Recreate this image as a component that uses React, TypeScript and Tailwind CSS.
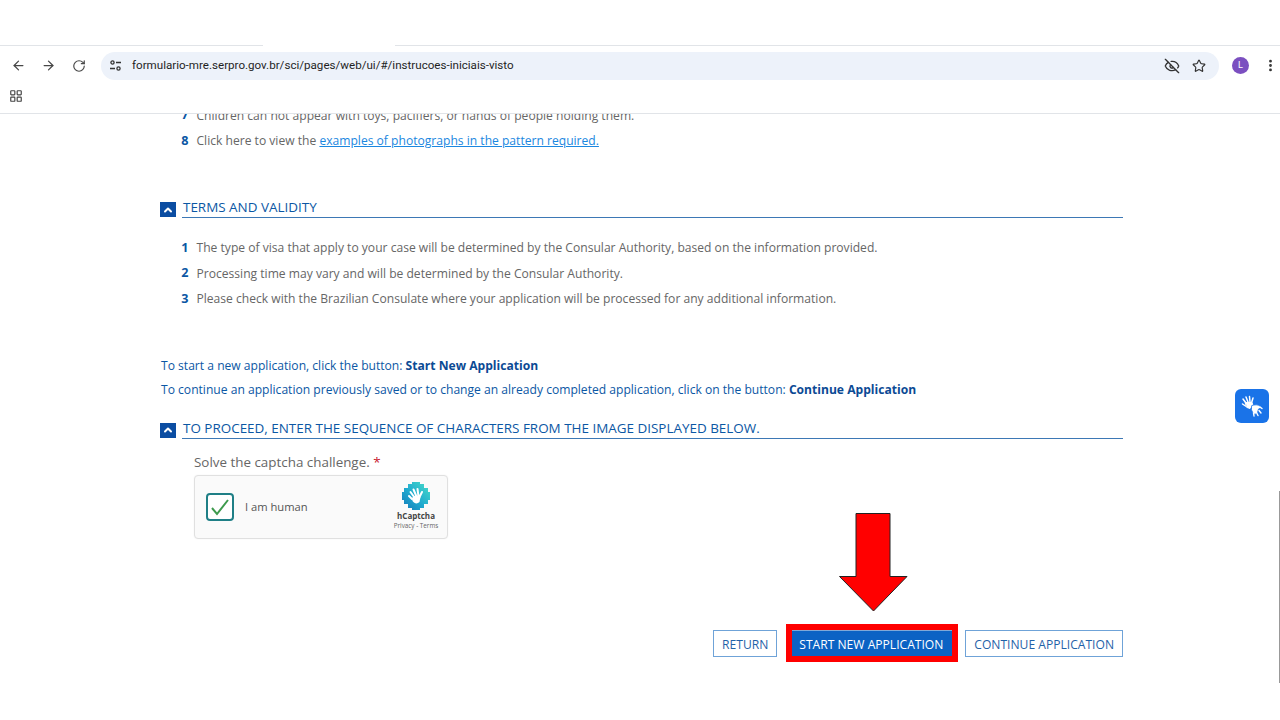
import React from "react";
import { ArrowLeft, ArrowRight, RotateCw, Star, EyeOff, MoreVertical, ChevronUp, LayoutGrid } from "lucide-react";

const F = "font-['Open_Sans',sans-serif]";

function Heading({ children }: { children: React.ReactNode }) {
  return (
    <div className="flex items-end h-[20px]">
      <div className="w-[16px] h-[15px] bg-[#0b4da2] flex items-center justify-center mb-[1px] shrink-0">
        <ChevronUp size={12} strokeWidth={4} className="text-white" />
      </div>
      <div className="ml-[6px] flex-1 border-b border-[#3d78b5] h-[20px] pl-[1px] text-[13.45px] leading-[18px] text-[#0b57a4] whitespace-nowrap">
        {children}
      </div>
    </div>
  );
}

function Row({ n, children }: { n: number; children: React.ReactNode }) {
  return (
    <div className="flex h-[25.5px] items-center text-[12.1px] text-[#666666] whitespace-nowrap">
      <span className="w-[15px] text-right font-bold text-[#0b57a4] mr-[8px] ml-[13.5px] text-[12.6px]">{n}</span>
      <span>{children}</span>
    </div>
  );
}

function SignHands() {
  return (
    <svg width="22" height="22" viewBox="0 0 22 22" fill="none" stroke="white" strokeLinecap="round" strokeLinejoin="round">
      <g strokeWidth="1.5">
        <path d="M2 4l3 4M5 2l2 5M8.5 1.5L9 7M12 3l-1.5 5" />
        <path d="M1.5 9l3 2" />
      </g>
      <path d="M4.5 7.5h6.5l1 3-3 3-3-1z" fill="white" stroke="white" strokeWidth="1" />
      <path d="M11 10.5c2.5-1 6-1 8 .5l1 2-2.5 1-1 3.5-2.5 2-2-1.5-1.5-3z" fill="white" stroke="#1a73e8" strokeWidth="0.8" />
      <g strokeWidth="1.4">
        <path d="M19 12l2 1.5M18 15.5l2 2.5M15.5 17.5l1.5 3M12.5 18l0.5 3" />
      </g>
    </svg>
  );
}

function HCaptchaLogo() {
  return (
    <svg width="28" height="28" viewBox="0 0 28 28">
      <defs>
        <linearGradient id="hc" x1="1" y1="0" x2="0" y2="1">
          <stop offset="0" stopColor="#4adfc8" />
          <stop offset="0.55" stopColor="#1fa9cf" />
          <stop offset="1" stopColor="#1579b8" />
        </linearGradient>
      </defs>
      <path d="M10 0h8v2h4v4h4v4h2v8h-2v4h-4v4h-4v2h-8v-2H6v-4H2v-4H0v-8h2V6h4V2h4z" fill="url(#hc)" />
      <path d="M7 14l3 3M8.5 10l4 5.5M11.5 7.5l3 7M15.5 7l1 7.5M20 10l-2.5 5" stroke="#fff" strokeWidth="2" strokeLinecap="round" fill="none" />
      <path d="M10 16l2-2 5 0 1.5 1-1 5c-2 2-5 2-7-1z" fill="#fff" />
    </svg>
  );
}

export default function App() {
  return (
    <div className={`relative w-[1280px] h-[720px] bg-white overflow-hidden ${F}`}>
      <div className="h-[45px] bg-white" />

      {/* Browser toolbar */}
      <div className="h-[69px] border-t border-b border-[#e1e4e8] bg-white font-['Roboto',sans-serif]">
        <div className="h-[39px] flex items-center pl-[11px] pr-[2px]">
          <ArrowLeft size={15} strokeWidth={2} className="text-[#474747]" />
          <ArrowRight size={15} strokeWidth={2} className="text-[#474747] ml-[15px]" />
          <RotateCw size={14} strokeWidth={2} className="text-[#474747] ml-[16px]" />
          <div className="ml-[15px] w-[1118px] h-[28px] rounded-full bg-[#edf2fa] flex items-center pl-[8px] pr-[13px]">
            <svg width="13" height="13" viewBox="0 0 13 13" fill="none" stroke="#333" strokeWidth="1.3">
              <circle cx="3.5" cy="3.5" r="1.6" />
              <path d="M7 3.5h5M1 9.5h5" />
              <circle cx="9.5" cy="9.5" r="1.6" />
            </svg>
            <span className="ml-[10px] text-[11.6px] text-[#1f1f1f] whitespace-nowrap">
              formulario-mre.serpro.gov.br/sci/pages/web/ui/#/instrucoes-iniciais-visto
            </span>
            <EyeOff size={16} strokeWidth={2} className="ml-auto text-[#333]" />
            <Star size={14} strokeWidth={2} className="ml-[12px] text-[#333]" />
          </div>
          <div className="ml-[13px] w-[17px] h-[17px] rounded-full bg-[#7b4fc0] text-white text-[9px] flex items-center justify-center">L</div>
          <MoreVertical size={15} strokeWidth={2.5} className="ml-[14px] text-[#333]" />
        </div>
        <div className="h-[28px] pl-[9px] flex items-start pt-[4px]">
          <LayoutGrid size={14} strokeWidth={2} className="text-[#444]" />
        </div>
      </div>

      {/* Page */}
      <div className="h-[606px] overflow-hidden pl-[160px] pr-[157px]">
        <div className="-mt-[11px]">
          <Row n={7}>Children can not appear with toys, pacifiers, or hands of people holding them.</Row>
          <Row n={8}>
            Click here to view the{" "}
            <span className="text-[#1b87e0] underline">examples of photographs in the pattern required.</span>
          </Row>
        </div>

        <div className="mt-[44px]">
          <Heading>TERMS AND VALIDITY</Heading>
        </div>
        <div className="mt-[17.5px]">
          <Row n={1}>The type of visa that apply to your case will be determined by the Consular Authority, based on the information provided.</Row>
          <Row n={2}>Processing time may vary and will be determined by the Consular Authority.</Row>
          <Row n={3}>Please check with the Brazilian Consulate where your application will be processed for any additional information.</Row>
        </div>

        <div className="mt-[41.5px] text-[12.1px] text-[#0b57a4] leading-[24px] whitespace-nowrap ml-[1px]">
          <div>To start a new application, click the button: <b className="text-[#0b4a94]">Start New Application</b></div>
          <div>To continue an application previously saved or to change an already completed application, click on the button: <b className="text-[#0b4a94]">Continue Application</b></div>
        </div>

        <div className="mt-[17px]">
          <Heading>TO PROCEED, ENTER THE SEQUENCE OF CHARACTERS FROM THE IMAGE DISPLAYED BELOW.</Heading>
        </div>

        <div className="ml-[34px] mt-[13px]">
          <div className="text-[13.4px] leading-[20px] text-[#666666]">
            Solve the captcha challenge. <span className="text-[#c8202f]">*</span>
          </div>
          <div className="mt-[3px] w-[254px] h-[64px] rounded-[4px] border border-[#e0e0e0] bg-[#fafafa] flex items-center pl-[11px] pr-[8px] shadow-[0_0_2px_rgba(0,0,0,0.06)]">
            <div className="w-[28px] h-[28px] rounded-[4px] border-2 border-[#1f7f86] bg-white flex items-center justify-center">
              <svg width="20" height="18" viewBox="0 0 20 18" fill="none" stroke="#3d9a4d" strokeWidth="2">
                <path d="M2 10l5 6L18 2" />
              </svg>
            </div>
            <span className="ml-[11px] pt-[2px] text-[11.2px] text-[#555]">I am human</span>
            <div className="ml-auto flex flex-col items-center w-[46px] -mt-[1px]">
              <HCaptchaLogo />
              <span className="mt-[1px] text-[8px] leading-[10px] font-bold text-[#444]">hCaptcha</span>
              <span className="text-[6.3px] leading-[10px] text-[#666] whitespace-nowrap">Privacy - Terms</span>
            </div>
          </div>
        </div>

        <div className="mt-[85px] flex justify-end items-start text-[12.1px]">
          <button className="mt-[6px] h-[27px] pt-[4px] px-[8px] border border-[#6fa3d8] text-[#1f62a8] flex items-center">RETURN</button>
          <div className="ml-[9px] border-[6px] border-[#ff0000] h-[38px] flex">
            <button className="h-[26px] w-[160px] pt-[4px] pr-[2px] bg-[#0b62c4] text-white border-t border-[#7fa8d8] flex items-center justify-center">
              START NEW APPLICATION
            </button>
          </div>
          <button className="ml-[7px] mt-[6px] h-[27px] pt-[4px] px-[8px] border border-[#6fa3d8] text-[#1f62a8] flex items-center">CONTINUE APPLICATION</button>
        </div>
      </div>

      {/* Overlays */}
      <div className="absolute left-[263px] top-[45px] w-[132px] h-[1px] bg-white" />
      <svg className="absolute left-[838px] top-[512px]" width="71" height="101" viewBox="0 0 71 101">
        <path d="M18 1.5h34v63h17L35.5 99 1.5 64.5H18z" fill="#ff0000" stroke="#222" strokeWidth="1" />
      </svg>
      <div className="absolute left-[1235px] top-[389px] w-[34px] h-[34px] rounded-[6px] bg-[#1a73e8] flex items-center justify-center">
        <SignHands />
      </div>
      <div className="absolute left-[1279px] top-[491px] w-[1px] h-[192px] bg-[#999999]" />
    </div>
  );
}
